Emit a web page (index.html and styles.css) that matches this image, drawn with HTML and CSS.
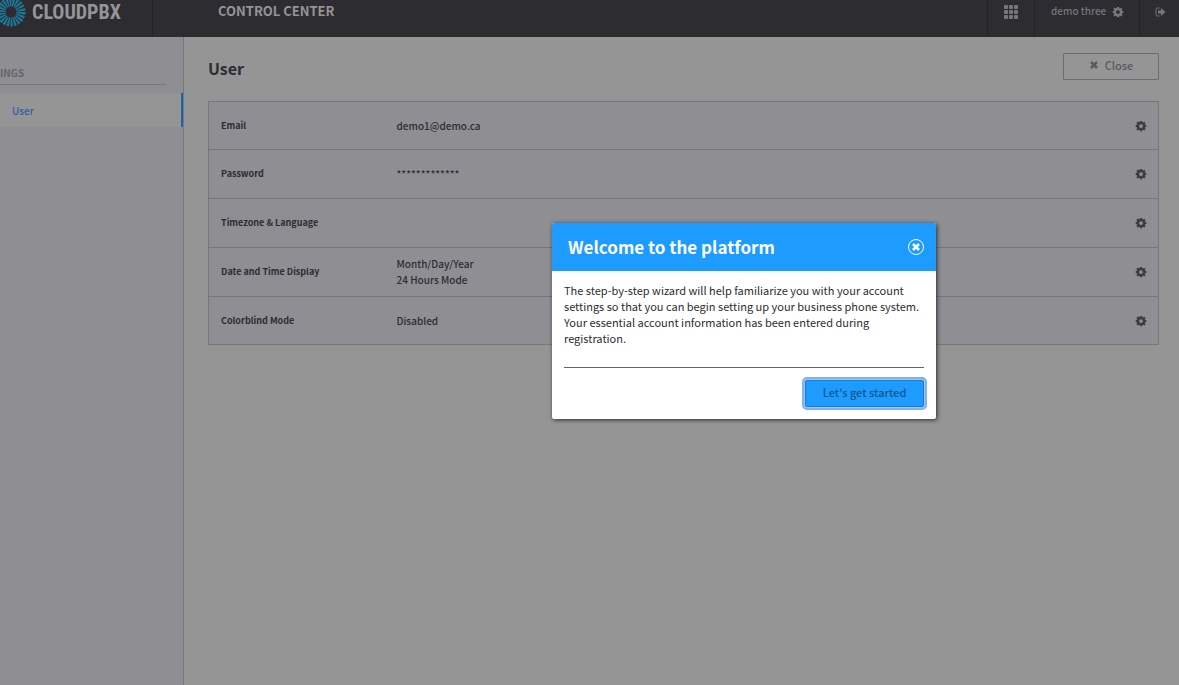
FILE: index.html
```html
<!DOCTYPE html>
<html lang="en">
<head>
    <meta charset="UTF-8">
    <meta name="viewport" content="width=device-width, initial-scale=1.0">
    <title>Control Center</title>
    <link rel="stylesheet" href="styles.css">
</head>
<body>

    <!-- Shared icons -->
    <svg class="sprite" aria-hidden="true">
        <symbol id="gear" viewBox="0 0 12 12">
            <path fill="currentColor" fill-rule="evenodd" d="M5 1h2l.3 1.3.7.3 1.2-.8 1.4 1.4-.8 1.2.3.7L11.300 5v2l-1.200.3-.3.7.8 1.200-1.400 1.400-1.200-.8-.7.3L7 11.300H5l-.3-1.200-.7-.3-1.200.8-1.400-1.400.8-1.200-.3-.7L.7 7V5l1.200-.3.3-.7-.8-1.200 1.400-1.400 1.200.8.700-.3zM6 4.200a1.900 1.900 0 1 0 0 3.800 1.900 1.900 0 0 0 0-3.800z"/>
        </symbol>
        <symbol id="cross" viewBox="0 0 10 10">
            <path d="M2 2l6 6M8 2l-6 6" fill="none" stroke="currentColor" stroke-width="2.500"/>
        </symbol>
    </svg>

    <header class="topbar">
        <a class="brand" href="#">
            <svg class="brand-mark" viewBox="0 0 30 30" aria-hidden="true">
                <circle cx="15" cy="15" r="10" fill="none" stroke="#1b7898" stroke-width="9" stroke-dasharray="2 1" pathLength="66"/>
            </svg>
            <span class="brand-name">CLOUDPBX</span>
        </a>
        <span class="topbar-title">CONTROL CENTER</span>
        <nav class="topbar-nav">
            <a class="nav-apps" href="#" aria-label="Apps">
                <svg width="14" height="14" viewBox="0 0 14 14" fill="currentColor">
                    <rect x="0" y="0" width="4" height="4" rx="1"/><rect x="5" y="0" width="4" height="4" rx="1"/><rect x="10" y="0" width="4" height="4" rx="1"/>
                    <rect x="0" y="5" width="4" height="4" rx="1"/><rect x="5" y="5" width="4" height="4" rx="1"/><rect x="10" y="5" width="4" height="4" rx="1"/>
                    <rect x="0" y="10" width="4" height="4" rx="1"/><rect x="5" y="10" width="4" height="4" rx="1"/><rect x="10" y="10" width="4" height="4" rx="1"/>
                </svg>
            </a>
            <a class="nav-user" href="#">demo three <svg class="icon"><use href="#gear"/></svg></a>
            <a class="nav-exit" href="#" aria-label="Log out">
                <svg width="11" height="10" viewBox="0 0 11 10">
                    <path d="M4.500 1H2.500Q1 1 1 2.500v5Q1 9 2.500 9h2" fill="none" stroke="currentColor"/>
                    <path d="M3 3.500h3V1l4.500 4L6 9V6.500H3z" fill="currentColor"/>
                </svg>
            </a>
        </nav>
    </header>

    <div class="layout">
        <aside class="sidebar">
            <h2 class="sidebar-title">INGS</h2>
            <a class="sidebar-link" href="#">User</a>
        </aside>

        <main class="content">
            <div class="content-head">
                <h1>User</h1>
                <button class="btn-close" type="button"><svg class="icon-small"><use href="#cross"/></svg>Close</button>
            </div>

            <table class="settings">
                <tr>
                    <th scope="row">Email</th>
                    <td>demo1@demo.ca</td>
                    <td class="action"><button type="button" aria-label="Edit email"><svg class="icon"><use href="#gear"/></svg></button></td>
                </tr>
                <tr>
                    <th scope="row">Password</th>
                    <td>*************</td>
                    <td class="action"><button type="button" aria-label="Edit password"><svg class="icon"><use href="#gear"/></svg></button></td>
                </tr>
                <tr>
                    <th scope="row">Timezone &amp; Language</th>
                    <td></td>
                    <td class="action"><button type="button" aria-label="Edit timezone"><svg class="icon"><use href="#gear"/></svg></button></td>
                </tr>
                <tr>
                    <th scope="row">Date and Time Display</th>
                    <td>Month/Day/Year<br>24 Hours Mode</td>
                    <td class="action"><button type="button" aria-label="Edit date display"><svg class="icon"><use href="#gear"/></svg></button></td>
                </tr>
                <tr>
                    <th scope="row">Colorblind Mode</th>
                    <td>Disabled</td>
                    <td class="action"><button type="button" aria-label="Edit colorblind mode"><svg class="icon"><use href="#gear"/></svg></button></td>
                </tr>
            </table>
        </main>
    </div>

    <!-- Welcome dialog -->
    <div class="modal" role="dialog" aria-labelledby="modal-title">
        <div class="modal-head">
            <h2 id="modal-title">Welcome to the platform</h2>
            <button class="modal-close" type="button" aria-label="Close dialog"><svg class="icon-small"><use href="#cross"/></svg></button>
        </div>
        <div class="modal-body">
            <p>The step-by-step wizard will help familiarize you with your account settings so that you can begin setting up your business phone system. Your essential account information has been entered during registration.</p>
            <div class="modal-foot">
                <button class="btn-start" type="button">Let's get started</button>
            </div>
        </div>
    </div>

</body>
</html>
```
FILE: styles.css
```css
* {
    box-sizing: border-box;
}

body {
    margin: 0;
    min-height: 100vh;
    display: flex;
    flex-direction: column;
    background: #959595;
    color: #2d2c31;
    font-family: "Noto Sans CJK SC", "Open Sans", sans-serif;
    font-size: 10px;
    line-height: 16px;
}

button {
    font-family: inherit;
    cursor: pointer;
}

a {
    color: inherit;
    text-decoration: none;
}

h1, h2, p {
    margin: 0;
}

.sprite {
    display: none;
}

.icon {
    width: 12px;
    height: 12px;
}

.icon-small {
    width: 10px;
    height: 10px;
}

/* Top bar */
.topbar {
    display: flex;
    height: 37px;
    background: #2d2c31;
    color: #959595;
    overflow: hidden;
}

.brand {
    display: flex;
    width: 153px;
    border-right: 1px solid #242328;
}

.brand-mark {
    flex: none;
    width: 30px;
    height: 30px;
    margin: -3px 0 0 -4px;
}

.brand-name {
    margin-left: 6px;
    font-family: "Roboto Condensed", "Noto Sans CJK SC", sans-serif;
    font-size: 20px;
    font-weight: bold;
    line-height: 24px;
}

.topbar-title {
    margin-left: 65px;
    font-size: 13px;
    font-weight: bold;
    line-height: 22px;
}

.topbar-nav {
    display: flex;
    margin-left: auto;
    color: #77767b;
    font-weight: 500;
    line-height: 22px;
}

.topbar-nav a {
    display: flex;
    border-left: 1px solid #242328;
}

.topbar-nav .icon {
    margin: 6px 0 0 6px;
}

.nav-apps {
    width: 47px;
    padding: 5px 0 0 16px;
}

.nav-user {
    width: 105px;
    padding-left: 16px;
}

.nav-exit {
    width: 40px;
    padding: 7px 0 0 15px;
}

/* Page */
.layout {
    display: flex;
    flex: 1;
}

.sidebar {
    width: 184px;
    flex: none;
    padding-top: 28px;
    background: #8f8e93;
    border-right: 1px solid #77767b;
}

.sidebar-title {
    margin: 0 17px 8px 0;
    padding-bottom: 3px;
    border-bottom: 1px solid #77767b;
    color: #66656a;
    font-size: 10px;
    font-weight: bold;
    line-height: 16px;
}

.sidebar-link {
    display: block;
    padding: 2px 12px 0;
    background: #959595;
    border-right: 2px solid #1b66a5;
    color: #2a64a4;
    font-weight: 500;
    line-height: 32px;
}

.content {
    flex: 1;
    padding: 16px 20px 16px 24px;
}

.content-head {
    display: flex;
    justify-content: space-between;
    margin-bottom: 18px;
}

.content-head h1 {
    font-size: 16px;
    font-weight: bold;
    line-height: 30px;
}

.btn-close {
    display: flex;
    align-items: center;
    justify-content: center;
    gap: 6px;
    width: 96px;
    height: 27px;
    padding: 0 0 3px;
    background: none;
    border: 1px solid #6c6b70;
    border-radius: 1px;
    color: #5a595e;
    font-size: 11px;
    font-weight: 500;
}

.settings {
    width: 100%;
    border-collapse: collapse;
    background: #8f8e93;
    border: 1px solid #77767b;
}

.settings tr {
    height: 49px;
    border-bottom: 1px solid #77767b;
}

.settings tr:first-child,
.settings tr:last-child {
    height: 48px;
}

.settings th {
    width: 176px;
    padding: 0 0 0 12px;
    font-size: 9px;
    font-weight: bold;
    text-align: left;
}

.settings td {
    padding: 0 0 0 12px;
    font-weight: 500;
}

.settings .action {
    padding: 0 11px 0 0;
}

.action button {
    display: block;
    margin-left: auto;
    padding: 0;
    background: none;
    border: 0;
    color: #3c3b40;
}

.action .icon {
    display: block;
}

/* Modal */
.modal {
    position: absolute;
    top: 223px;
    left: 552px;
    width: 384px;
    background: #fff;
    border-radius: 2px;
    box-shadow: 1px 1px 4px #2d2c31;
}

.modal-head {
    display: flex;
    align-items: center;
    justify-content: space-between;
    height: 48px;
    padding: 0 12px 0 16px;
    background: #1e9bff;
    border-radius: 2px 2px 0 0;
    color: #fff;
}

.modal-head h2 {
    font-size: 17px;
    font-weight: bold;
    line-height: 24px;
}

.modal-close {
    display: flex;
    align-items: center;
    justify-content: center;
    width: 16px;
    height: 16px;
    padding: 0;
    background: none;
    border: 1px solid #fff;
    border-radius: 50%;
    color: #fff;
}

.modal-body {
    padding: 11px 12px 12px;
    font-size: 11px;
}

.modal-foot {
    display: flex;
    justify-content: flex-end;
    margin-top: 21px;
    padding-top: 12px;
    border-top: 1px solid #66656a;
}

.btn-start {
    width: 119px;
    height: 27px;
    padding: 0 0 3px;
    background: #1e9bff;
    border: 1px solid #0f7fe0;
    border-radius: 2px;
    box-shadow: 0 0 0 1px #b9bfc8, 0 0 0 3px #7ab3fb;
    color: #11598f;
    font-size: 11px;
    font-weight: 500;
}
```
